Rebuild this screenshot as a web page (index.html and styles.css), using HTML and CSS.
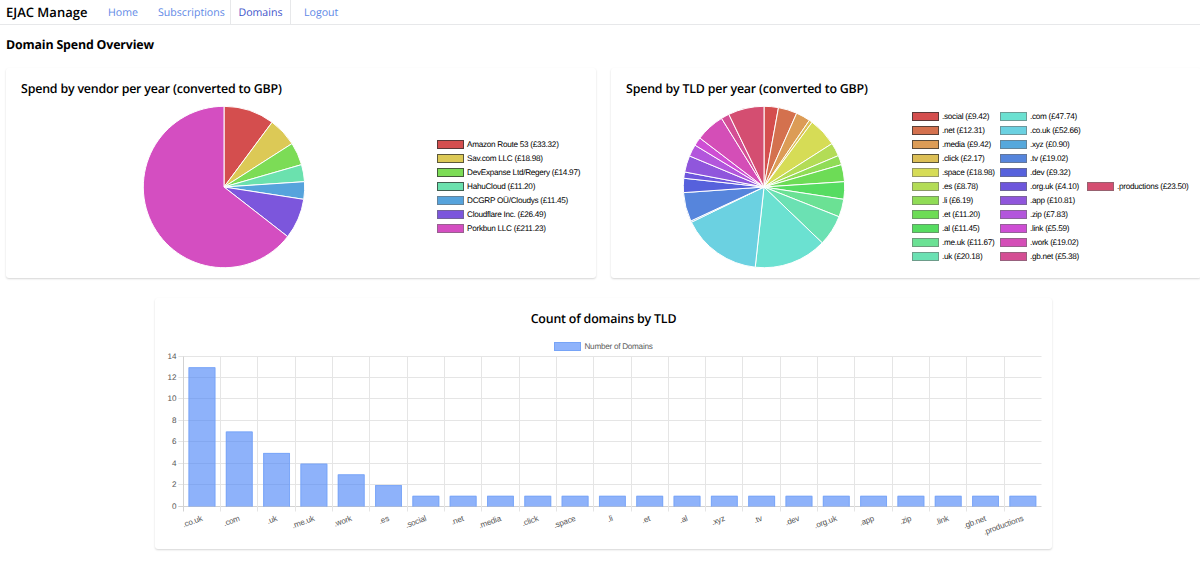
FILE: index.html
```html
<!DOCTYPE html>
<html lang="en">
<head>
  <meta charset="UTF-8" />
  <title>EJAC Manage</title>
  <meta name="viewport" content="width=device-width, initial-scale=1.0" />
  <link rel="stylesheet" href="styles.css">
</head>
<body>
  <nav class="navbar">
    <a href="#" class="brand">EJAC Manage</a>
    <a href="#" class="nav-link home">Home</a>
    <a href="#" class="nav-link subs">Subscriptions</a>
    <a href="#" class="nav-link active">Domains</a>
    <a href="#" class="nav-link logout">Logout</a>
  </nav>

  <h1>Domain Spend Overview</h1>

  <div class="charts">
    <div class="card">
      <h2>Spend by vendor per year (converted to GBP)</h2>
      <div class="chart-row">
        <svg class="pie" id="vendorPie" viewBox="-82 -82 164 164"></svg>
        <div class="legend" id="vendorLegend"></div>
      </div>
    </div>
    <div class="card">
      <h2>Spend by TLD per year (converted to GBP)</h2>
      <div class="chart-row">
        <svg class="pie" id="tldPie" viewBox="-82 -82 164 164"></svg>
        <div class="legend" id="tldLegend"></div>
      </div>
    </div>
  </div>

  <div class="card bar-card">
    <h2>Count of domains by TLD</h2>
    <div class="bar-legend"><span class="swatch blue"></span>Number of Domains</div>
    <svg class="bars" id="bars" viewBox="0 0 896 195"></svg>
  </div>

  <script src="script.js"></script>
</body>
</html>
```

FILE: styles.css
```css
* {
  box-sizing: border-box;
}

body {
  margin: 0;
  font-family: "Segoe UI", "Open Sans", "Noto Sans", sans-serif;
  background: #fff;
  color: #000;
  height: 568px;
  overflow: hidden;
  text-rendering: geometricPrecision;
}

.navbar {
  display: flex;
  height: 25px;
  padding-left: 6px;
  border-bottom: 1px solid #e7e8ea;
  font-size: 10.6px;
  line-height: 26px;
}

.navbar a {
  text-decoration: none;
  white-space: nowrap;
}

.brand {
  width: 102px;
  color: #000;
  font-size: 13px;
  font-weight: 600;
  line-height: 24px;
}

.nav-link {
  color: #6088e6;
}

.home {
  width: 50px;
}

.subs {
  width: 72px;
}

.nav-link.active {
  width: 61px;
  text-align: center;
  color: #4053ca;
  border-left: 1px solid #e7e8ea;
  border-right: 1px solid #e7e8ea;
}

.logout {
  padding-left: 13px;
}

h1 {
  margin: 11px 0 14px 6px;
  font-size: 12.4px;
  line-height: 18px;
  font-weight: 700;
  letter-spacing: -0.17px;
}

h2 {
  margin: 0;
  font-size: 12.4px;
  line-height: 19px;
  font-weight: 600;
  letter-spacing: -0.18px;
}

h1, h2 {
  white-space: nowrap;
}

.charts {
  display: grid;
  grid-template-columns: 590px 590px;
  gap: 15px;
  margin-left: 6px;
}

.card {
  height: 210px;
  padding: 11px 15px;
  background: #fff;
  border-radius: 3px;
  box-shadow: 0 1px 2px rgba(0, 0, 0, 0.17);
}

.chart-row {
  display: flex;
  align-items: center;
  height: 164px;
  margin-top: 7px;
  padding-left: 121px;
}

.charts .card + .card .chart-row {
  padding-left: 56px;
}

.pie {
  flex: none;
  width: 164px;
  height: 164px;
}

.legend {
  display: flex;
  align-items: center;
  margin: -1px 0 0 131px;
  font-family: "Liberation Sans", Arial, sans-serif;
  font-size: 8.2px;
  letter-spacing: -0.28px;
}

#tldLegend {
  margin-left: 66px;
}

.legend-item {
  display: flex;
  align-items: center;
  gap: 3px;
  height: 13.95px;
  white-space: nowrap;
}

.legend-col {
  width: 88px;
}

.legend-col:nth-child(2) {
  width: 87px;
}

.swatch {
  flex: none;
  width: 27px;
  height: 9px;
  border: 1px solid rgba(110, 110, 110, 0.6);
}

.swatch.dark {
  border-color: rgba(50, 50, 50, 0.75);
}

.bar-card {
  width: 897px;
  height: 251px;
  margin: 20px 0 0 155px;
  padding: 11px 0 0;
}

.bar-card h2 {
  text-align: center;
}

.bar-legend {
  display: flex;
  align-items: center;
  justify-content: center;
  gap: 3px;
  height: 12px;
  margin-top: 12px;
  font-family: "Liberation Sans", Arial, sans-serif;
  font-size: 8.2px;
  letter-spacing: -0.28px;
  color: #5c5c5c;
}

.swatch.blue {
  background: #8fb3fb;
  border-color: #77a4f7;
}

.bars {
  display: block;
  width: 896px;
  height: 195px;
  font-family: "Liberation Sans", Arial, sans-serif;
  font-size: 8.1px;
}

.bars text {
  fill: #555;
}

.bars .label {
  letter-spacing: -0.18px;
}

.bars line {
  stroke: #e5e5e5;
}

.bars .axis {
  stroke: #d2d2d2;
}

.bars rect {
  fill: rgba(66, 127, 247, 0.6);
}

.bars .bar-edge {
  stroke: #77a4f7;
  stroke-width: 0.8;
  fill: none;
}
```

FILE: script.js
```javascript
const vendors = [
  ["Amazon Route 53", 33.32], ["Sav.com LLC", 18.98], ["DevExpanse Ltd/Regery", 14.97],
  ["HahuCloud", 11.20], ["DCGRP OÜ/Cloudys", 11.45], ["Cloudflare Inc.", 26.49],
  ["Porkbun LLC", 211.23]
];

const tlds = [
  [".social", 9.42], [".net", 12.31], [".media", 9.42], [".click", 2.17], [".space", 18.98],
  [".es", 8.78], [".li", 6.19], [".et", 11.20], [".al", 11.45], [".me.uk", 11.67],
  [".uk", 20.18], [".com", 47.74], [".co.uk", 52.66], [".xyz", 0.90], [".tv", 19.02],
  [".dev", 9.32], [".org.uk", 4.10], [".app", 10.81], [".zip", 7.83], [".link", 5.59],
  [".work", 19.02], [".gb.net", 5.38], [".productions", 23.50]
];

const counts = [
  [".co.uk", 13], [".com", 7], [".uk", 5], [".me.uk", 4], [".work", 3], [".es", 2],
  [".social", 1], [".net", 1], [".media", 1], [".click", 1], [".space", 1], [".li", 1],
  [".et", 1], [".al", 1], [".xyz", 1], [".tv", 1], [".dev", 1], [".org.uk", 1],
  [".app", 1], [".zip", 1], [".link", 1], [".gb.net", 1], [".productions", 1]
];

// greens to cyans are drawn a little lighter than the rest
function color(i, n) {
  const hue = i * 360 / n;
  const light = hue > 130 && hue < 200 ? 65 : hue < 20 || hue > 290 ? 57 : 60;
  return `hsl(${hue}, ${hue > 290 || hue < 20 ? 61 : 66}%, ${light}%)`;
}

function drawPie(id, data) {
  const r = 80.7;
  const total = data.reduce((sum, d) => sum + d[1], 0);
  let angle = 0;
  let out = "";
  data.forEach((d, i) => {
    const end = angle + d[1] / total * Math.PI * 2;
    const large = end - angle > Math.PI ? 1 : 0;
    out += `<path d="M0 0L${r * Math.sin(angle)} ${-r * Math.cos(angle)}A${r} ${r} 0 ${large} 1 ${r * Math.sin(end)} ${-r * Math.cos(end)}Z" fill="${color(i, data.length)}" stroke="#fff" stroke-width="1" stroke-linejoin="bevel"/>`;
    angle = end;
  });
  document.getElementById(id).innerHTML = out;
}

function drawLegend(id, data, perCol) {
  let out = "";
  for (let c = 0; c < data.length; c += perCol) {
    out += `<div class="legend-col">`;
    data.slice(c, c + perCol).forEach((d, j) => {
      const i = c + j;
      out += `<div class="legend-item"><span class="swatch${i < 4 ? " dark" : ""}" style="background-color: ${color(i, data.length)}"></span>${d[0]} (£${d[1].toFixed(2)})</div>`;
    });
    out += `</div>`;
  }
  document.getElementById(id).innerHTML = out;
}

function drawBars() {
  const left = 28.3, right = 886.5, top = 4.5, bottom = 154.5;
  const step = (right - left) / counts.length;
  const unit = (bottom - top) / 14;
  let out = "";
  for (let v = 0; v <= 14; v += 2) {
    const y = Math.round(bottom - v * unit) - 0.5;
    out += `<line x1="${left - 5}" x2="${right}" y1="${y}" y2="${y}"${v ? "" : ' class="axis"'}/>`;
    out += `<text x="21.5" y="${y + 2.5}" text-anchor="end">${v}</text>`;
  }
  for (let i = 0; i < counts.length; i++) {
    const x = Math.floor(left + i * step) + 0.5;
    out += `<line x1="${x}" x2="${x}" y1="${top}" y2="${bottom + 5}"${i ? "" : ' class="axis"'}/>`;
  }
  counts.forEach((d, i) => {
    const x = left + i * step + step * 0.14;
    const w = step * 0.72;
    const y = bottom - d[1] * unit;
    const mid = x + w / 2 + 1;
    out += `<rect x="${x}" y="${y}" width="${w}" height="${d[1] * unit}"/>`;
    out += `<path class="bar-edge" d="M${x + 0.5} ${bottom}V${y + 0.5}H${x + w - 0.5}V${bottom}"/>`;
    out += `<text class="label" transform="translate(${mid} 168.5) rotate(-20)" text-anchor="end">${d[0]}</text>`;
  });
  document.getElementById("bars").innerHTML = out;
}

drawPie("vendorPie", vendors);
drawLegend("vendorLegend", vendors, 7);
drawPie("tldPie", tlds);
drawLegend("tldLegend", tlds, 11);
drawBars();
```
